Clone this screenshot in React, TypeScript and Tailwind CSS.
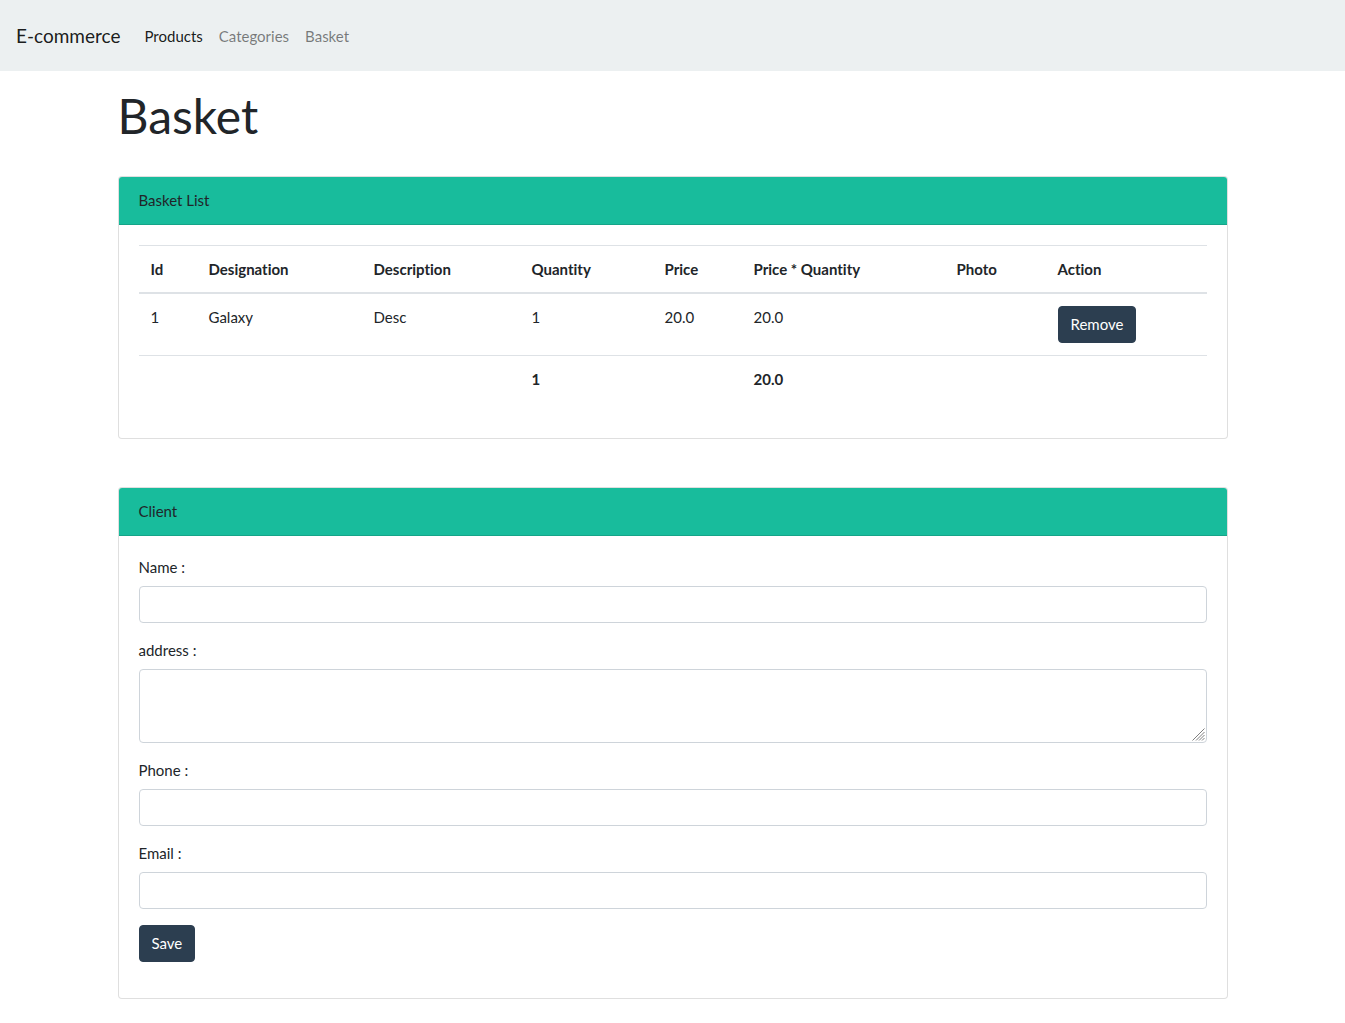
import React from "react";

const columns = [
  { label: "Id", width: "w-[58px]" },
  { label: "Designation", width: "w-[165px]" },
  { label: "Description", width: "w-[158px]" },
  { label: "Quantity", width: "w-[133px]" },
  { label: "Price", width: "w-[89px]" },
  { label: "Price * Quantity", width: "w-[203px]" },
  { label: "Photo", width: "w-[101px]" },
  { label: "Action", width: "w-[161px]" },
];

const button =
  "cursor-pointer rounded border border-[#2c3e50] bg-[#2c3e50] px-3 py-1.5 text-[15px] leading-[23px] text-white hover:bg-[#1e2b37]";
const field =
  "block w-full rounded border border-[#ced4da] bg-white px-3 py-1.5 text-[15px] leading-[23px] text-[#7b8a8b]";

function Card({ title, children }: { title: string; children: React.ReactNode }) {
  return (
    <section className="overflow-hidden rounded border border-black/[0.125] bg-white">
      <h2 className="border-b border-black/[0.125] bg-[#18bc9c] px-5 py-3 leading-[23px]">{title}</h2>
      <div className="px-5 pt-5 pb-9">{children}</div>
    </section>
  );
}

function Field({ id, label, type = "text" }: { id: string; label: string; type?: string }) {
  return (
    <div className="mb-4">
      <label htmlFor={id} className="mb-2 block">
        {label}
      </label>
      {type === "textarea" ? (
        <div className="relative">
          <textarea
            id={id}
            name={id}
            rows={2}
            className={`${field} h-[74px] resize-y [&::-webkit-resizer]:hidden`}
          />
          <svg
            aria-hidden="true"
            viewBox="0 0 13 13"
            className="pointer-events-none absolute right-0.5 bottom-0.5 size-[13px]"
            fill="none"
            stroke="#808080"
            strokeWidth="1"
          >
            <path d="M0.5 12.5L12.5 0.5M4 12.5L12.5 4M7 12.5L12.5 7M10 12.5L12.5 10" />
          </svg>
        </div>
      ) : (
        <input id={id} name={id} type={type} className={field} />
      )}
    </div>
  );
}

export default function App() {
  return (
    <div className="bg-white pb-6 font-['Lato',sans-serif] text-[15px] leading-[22px] text-[#212529] [font-variant-ligatures:none]">
      <nav className="flex items-center bg-[#ecf0f1] px-4 py-4">
        <a href="#" className="mr-4 py-1 text-[19px] leading-[31px] text-black/90">
          E-commerce
        </a>
        <ul className="flex">
          <li>
            <a href="#products" className="block p-2 text-black/90">Products</a>
          </li>
          <li>
            <a href="#categories" className="block p-2 text-black/50">Categories</a>
          </li>
          <li>
            <a href="#basket" className="block p-2 text-black/50">Basket</a>
          </li>
        </ul>
      </nav>

      <main className="mx-auto max-w-[1140px] px-[15px] pt-4">
        <h1 className="mb-8 text-[48px] leading-[57px]">Basket</h1>

        <Card title="Basket List">
          <table className="w-full table-fixed border-collapse text-left">
            <thead>
              <tr className="border-t border-b-2 border-[#dee2e6]">
                {columns.map((column) => (
                  <th key={column.label} className={`${column.width} p-3 font-bold`}>
                    {column.label}
                  </th>
                ))}
              </tr>
            </thead>
            <tbody>
              <tr className="align-top">
                <td className="p-3">1</td>
                <td className="p-3">Galaxy</td>
                <td className="p-3">Desc</td>
                <td className="p-3">1</td>
                <td className="p-3">20.0</td>
                <td className="p-3">20.0</td>
                <td className="p-3"></td>
                <td className="p-3">
                  <button type="button" className={`${button} block`}>Remove</button>
                </td>
              </tr>
              <tr className="border-t border-[#dee2e6]">
                <td colSpan={3} className="p-3"></td>
                <th className="p-3 font-bold">1</th>
                <td className="p-3"></td>
                <th className="p-3 font-bold">20.0</th>
                <td colSpan={2} className="p-3"></td>
              </tr>
            </tbody>
          </table>
        </Card>

        <div className="mt-12">
          <Card title="Client">
            <form onSubmit={(event) => event.preventDefault()}>
              <Field id="name" label="Name :" />
              <Field id="address" label="address :" type="textarea" />
              <Field id="phone" label="Phone :" />
              <Field id="email" label="Email :" type="email" />
              <button type="submit" className={`${button} block`}>Save</button>
            </form>
          </Card>
        </div>
      </main>
    </div>
  );
}
